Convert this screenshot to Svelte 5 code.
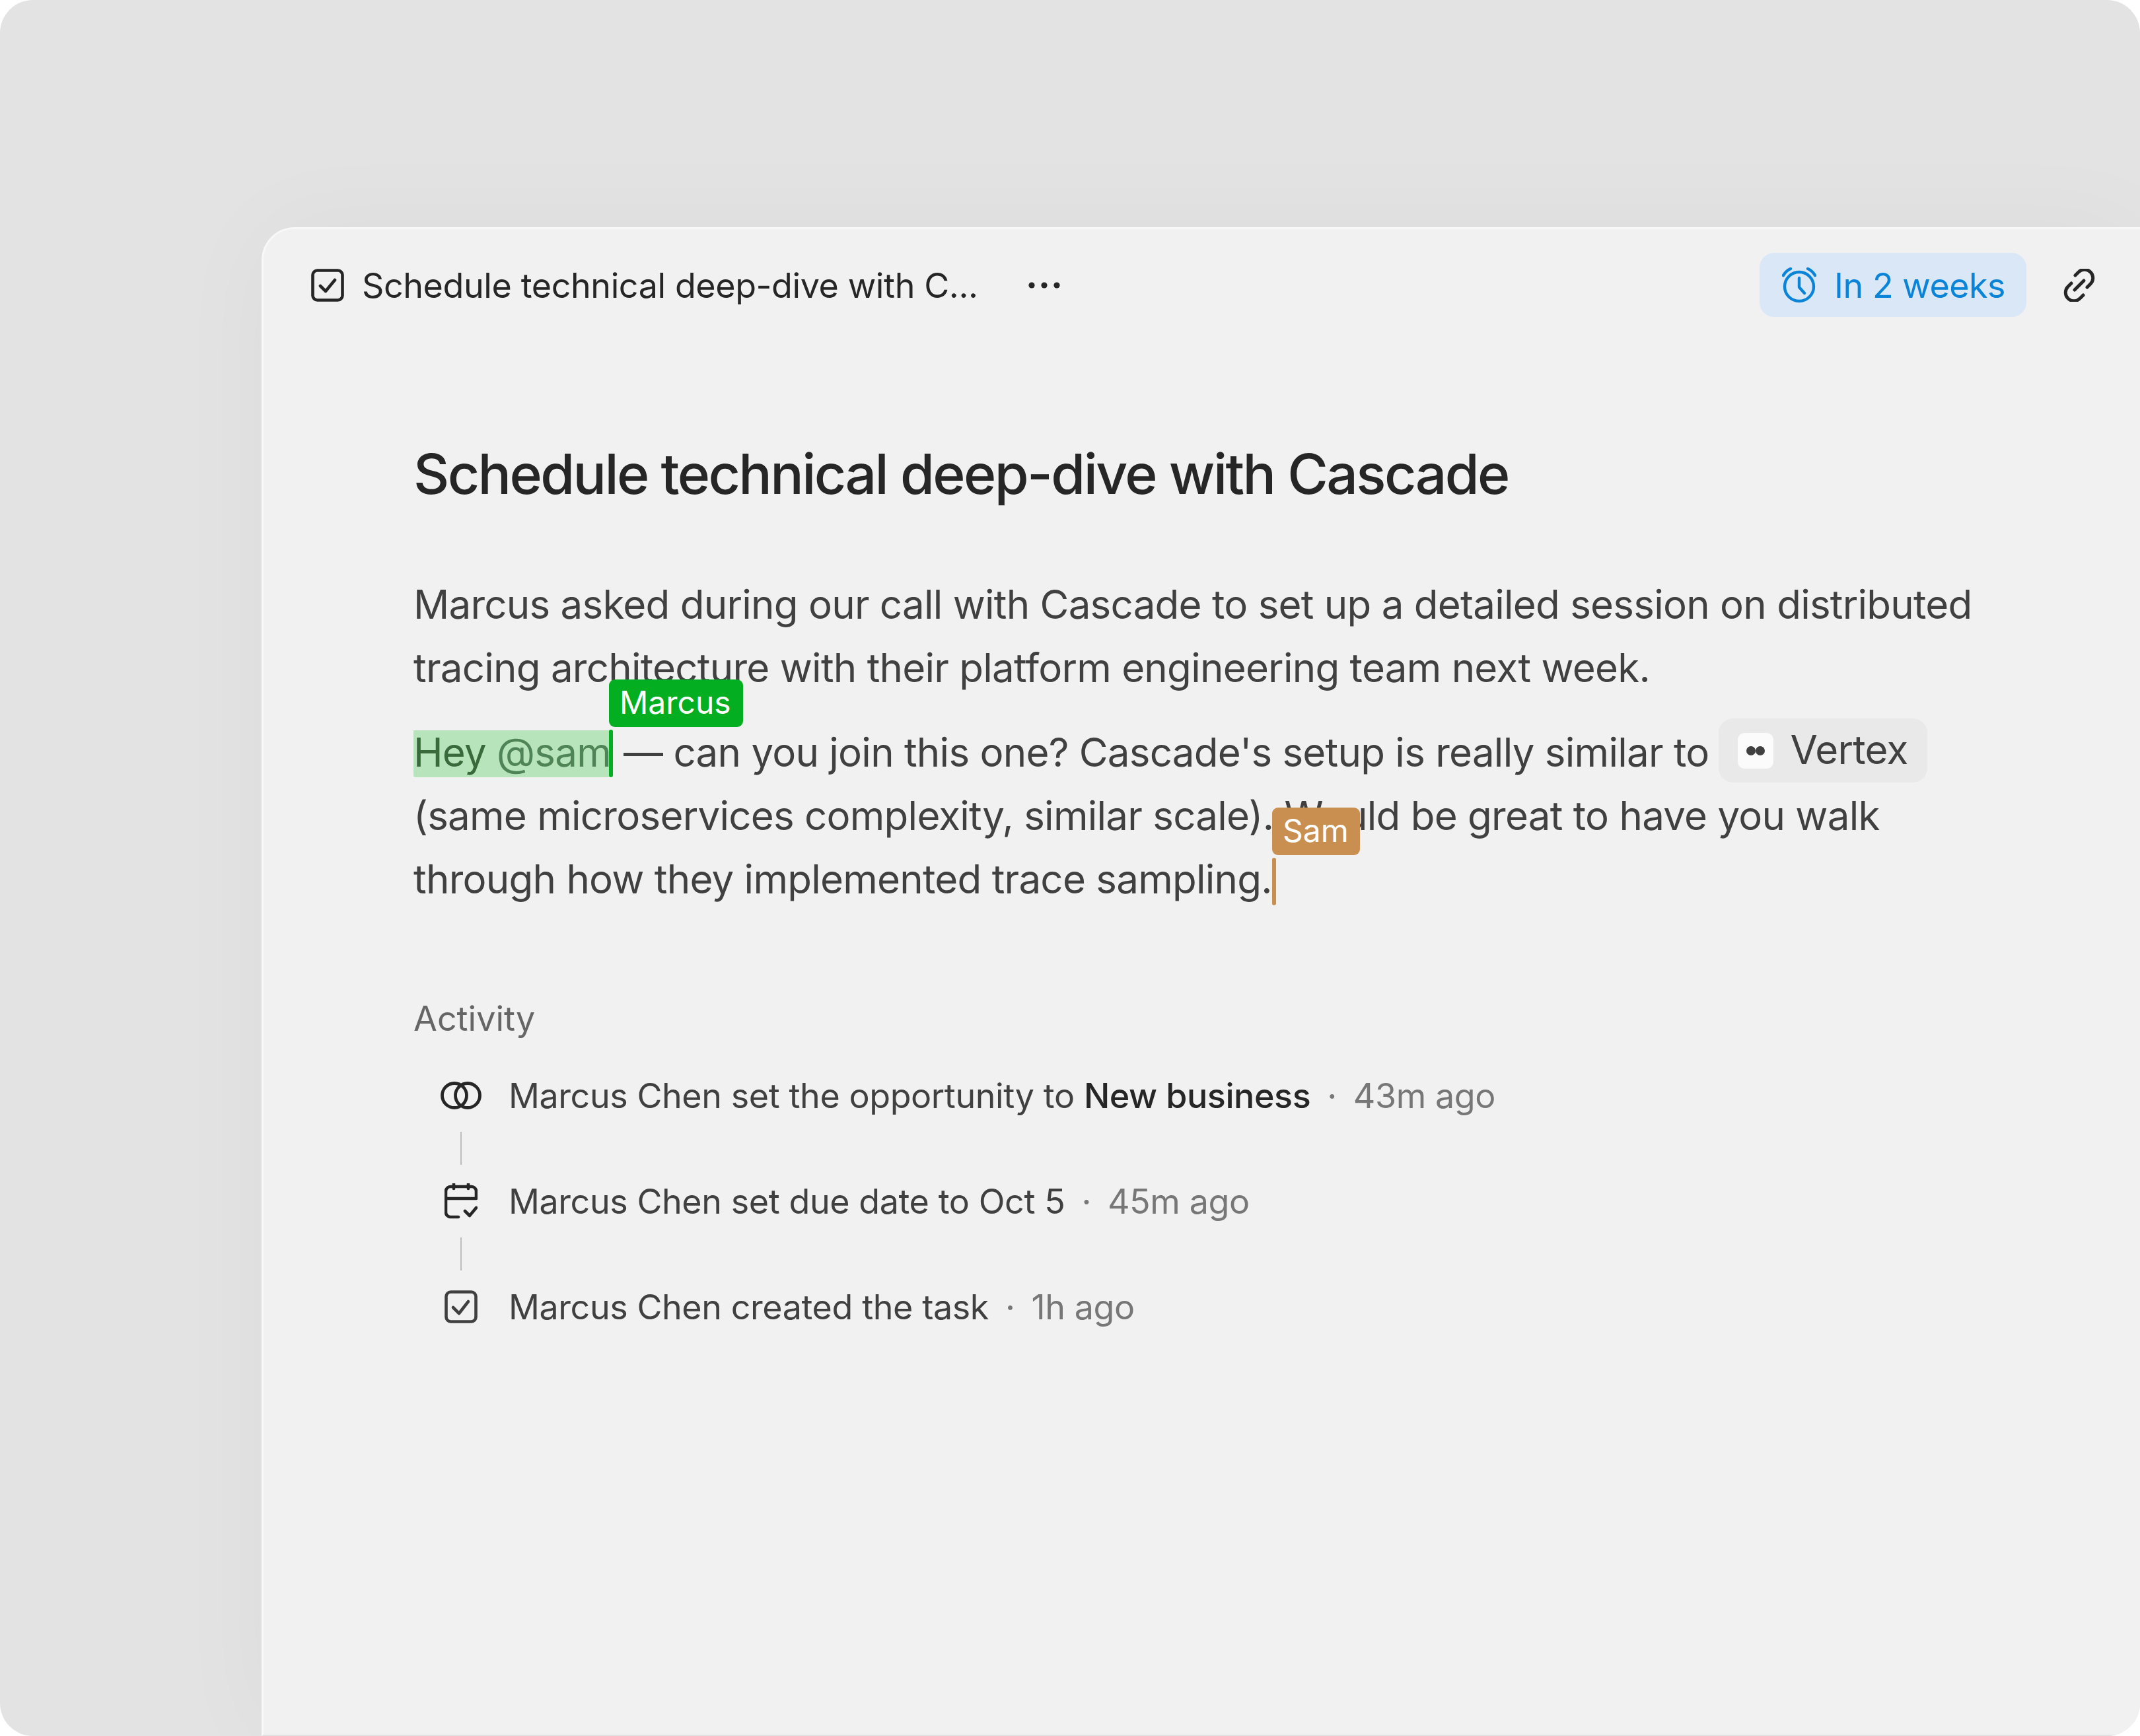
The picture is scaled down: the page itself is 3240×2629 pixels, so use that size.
<script>
  const activity = [
    { icon: "rings", text: "Marcus Chen set the opportunity to ", strong: "New business", time: "43m ago" },
    { icon: "calendar", text: "Marcus Chen set due date to Oct 5", time: "45m ago" },
    { icon: "check", text: "Marcus Chen created the task", time: "1h ago" },
  ];
</script>

<div class="frame">
  <section class="card">
    <header class="bar">
      <svg class="icon" viewBox="0 0 50 50" fill="none" stroke="#262626" stroke-width="4.6" stroke-linecap="round" stroke-linejoin="round">
        <rect x="2.5" y="2.5" width="45" height="45" rx="7" />
        <path d="M14 26l8 8 14-17" />
      </svg>
      <span class="crumb">Schedule technical deep-dive with C...</span>
      <svg class="dots" viewBox="0 0 50 12" fill="#262626">
        <circle cx="6" cy="6" r="4.6" /><circle cx="25" cy="6" r="4.6" /><circle cx="44" cy="6" r="4.6" />
      </svg>
      <div class="due">
        <svg class="alarm" viewBox="0 0 52 54" fill="none" stroke="#0a84d8" stroke-width="4.4" stroke-linecap="round" stroke-linejoin="round">
          <circle cx="26" cy="29" r="22" />
          <path d="M26 16v14l8 9" />
          <path d="M2 12C5 7 8 4 13 2M50 12C47 7 44 4 39 2" />
        </svg>
        <span class="due-label">In 2 weeks</span>
      </div>
      <svg class="icon link" viewBox="0 0 50 50" fill="none" stroke="#262626" stroke-width="5" stroke-linecap="round">
        <path d="M19 10l5-5c5-5 13-5 18 0s5 13 0 18l-5 5" />
        <path d="M31 40l-5 5c-5 5-13 5-18 0S3 32 8 27l5-5" />
        <path d="M18 32l14-14" />
      </svg>
    </header>

    <div class="body">
      <h1>Schedule technical deep-dive with Cascade</h1>

      <p>Marcus asked during our call with Cascade to set up a detailed session on distributed tracing architecture with their platform engineering team next week.</p>
      <p>
        <span class="sel"><span class="hey">Hey</span> @sam</span><span class="caret green"><span class="tag green">Marcus</span></span>
        — can you join this one? Cascade's setup is really similar to
        <span class="chip"><span class="logo"><i></i><i></i></span><span class="chip-label">Vertex</span></span>
        (same microservices complexity, similar scale). Would be great to have you walk through how they implemented trace sampling.<span class="caret orange"><span class="tag orange">Sam</span></span>
      </p>

      <h2>Activity</h2>
      <ul class="activity">
        {#each activity as item, i}
          {#if i > 0}
            <li class="link-line" aria-hidden="true"></li>
          {/if}
          <li class="row">
            <span class="slot">
              {#if item.icon === "rings"}
                <svg class="rings" viewBox="0 0 62 42" fill="none" stroke="#262626" stroke-width="4.8">
                  <circle cx="21" cy="21" r="18.5" /><circle cx="41" cy="21" r="18.5" />
                </svg>
              {:else if item.icon === "calendar"}
                <svg class="cal" viewBox="0 0 50 54" fill="none" stroke="#262626" stroke-width="4.6" stroke-linecap="round" stroke-linejoin="round">
                  <path d="M21 51H9a7 7 0 0 1-7-7V12a7 7 0 0 1 7-7h32a7 7 0 0 1 7 7v11H2" />
                  <path d="M14 1v7M36 1v7" />
                  <path d="M31 42l7 7 10-12" />
                </svg>
              {:else}
                <svg class="icon" viewBox="0 0 50 50" fill="none" stroke="#404040" stroke-width="4.6" stroke-linecap="round" stroke-linejoin="round">
                  <rect x="2.5" y="2.5" width="45" height="45" rx="7" />
                  <path d="M13 26l9 9 14-18" />
                </svg>
              {/if}
            </span>
            <span class="text">{item.text}{#if item.strong}<b>{item.strong}</b>{/if}</span>
            <span class="sep">·</span>
            <span class="time">{item.time}</span>
          </li>
        {/each}
      </ul>
    </div>
  </section>
</div>

<style>
  :global(body) { margin: 0; background: #fff; font-family: Inter, "Liberation Sans", sans-serif; }

  .frame {
    height: 2629px;
    box-sizing: border-box;
    padding: 344px 0 0 396px;
    background: #e3e3e3;
    border-radius: 50px;
    overflow: hidden;
  }
  .card {
    height: 2285px;
    box-sizing: border-box;
    background: #f1f1f1;
    border: solid #f8f8f8;
    border-width: 3px 0 2px 3px;
    border-bottom-color: #e0e0e0;
    border-top-left-radius: 50px;
    box-shadow: 0 0 160px rgba(0, 0, 0, 0.035);
  }

  .bar {
    display: flex;
    align-items: center;
    padding: 36px 67px 0 72px;
    height: 97px;
    color: #262626;
  }
  .icon { width: 50px; height: 50px; flex: none; }
  .crumb { margin: 2px 0 0 27px; font-size: 52px; letter-spacing: -0.4px; }
  .dots { width: 50px; height: 12px; margin-left: 75px; }
  .due {
    display: flex;
    align-items: center;
    gap: 27px;
    height: 97px;
    margin-left: auto;
    padding: 0 32px 0 34px;
    border-radius: 22px;
    background: #d9e7f6;
    color: #0a84d8;
    font-size: 52px;
    letter-spacing: -0.5px;
  }
  .due-label { margin-top: 2px; }
  .alarm { width: 52px; height: 54px; }
  .link { margin-left: 55px; }

  .body { padding: 0 0 0 227px; }
  h1 {
    margin: 188px 0 0;
    font-size: 84px;
    font-weight: 500;
    letter-spacing: -2.6px;
    line-height: 100px;
    color: #262626;
  }
  p {
    margin: 32px 0 0;
    max-width: 2400px;
    font-size: 60px;
    letter-spacing: -0.74px;
    line-height: 96px;
    color: #404040;
  }
  h1 + p { margin-top: 99px; }

  .sel {
    padding-bottom: 2px;
    background: linear-gradient(transparent 3px, #b8e4bb 3px);
    color: #4f8457;
    border-radius: 3px;
  }
  .hey { color: #386a3c; }
  .caret {
    position: relative;
    display: inline-block;
    width: 6px;
    height: 72px;
    border-radius: 3px;
  }
  .caret.green { margin-left: -3px; vertical-align: -16px; }
  .caret.orange { vertical-align: -18px; }
  .tag {
    position: absolute;
    left: 0;
    bottom: 76px;
    padding: 0 18px 0 16px;
    height: 72px;
    border-radius: 9px;
    color: #fff;
    font-size: 48px;
    letter-spacing: 0;
    line-height: 70px;
  }
  .tag.orange { padding-right: 17px; }
  .green { background: #03ae20; }
  .orange { background: #c98f50; }

  .chip {
    display: inline-flex;
    align-items: center;
    gap: 26px;
    height: 97px;
    padding: 0 30px 0 29px;
    margin: -16px 0 0 -2px;
    border-radius: 22px;
    background: #e9e9e9;
    vertical-align: middle;
  }
  .chip-label { margin-bottom: 4px; }
  .logo {
    display: flex;
    justify-content: center;
    align-items: center;
    width: 54px;
    height: 54px;
    border-radius: 10px;
    background: #fbfbfb;
  }
  .logo i { width: 14px; height: 14px; border-radius: 50%; background: #404040; }

  h2 {
    margin: 132px 0 0;
    font-size: 52px;
    font-weight: 400;
    line-height: 64px;
    color: #666;
  }
  .activity { margin: 52px 0 0; padding: 0; list-style: none; }
  .row {
    display: flex;
    align-items: center;
    height: 64px;
    font-size: 52px;
    letter-spacing: -0.42px;
    color: #404040;
  }
  .slot { display: flex; justify-content: center; width: 144px; flex: none; }
  .rings { width: 62px; height: 42px; }
  .cal { width: 50px; height: 54px; }
  .text b { font-weight: 500; color: #262626; }
  .sep { margin: 0 25px; color: #777; }
  .time { color: #777; }
  .link-line {
    width: 2px;
    height: 50px;
    margin: 23px 0 23px 71px;
    background: #bdbdbd;
  }
</style>
